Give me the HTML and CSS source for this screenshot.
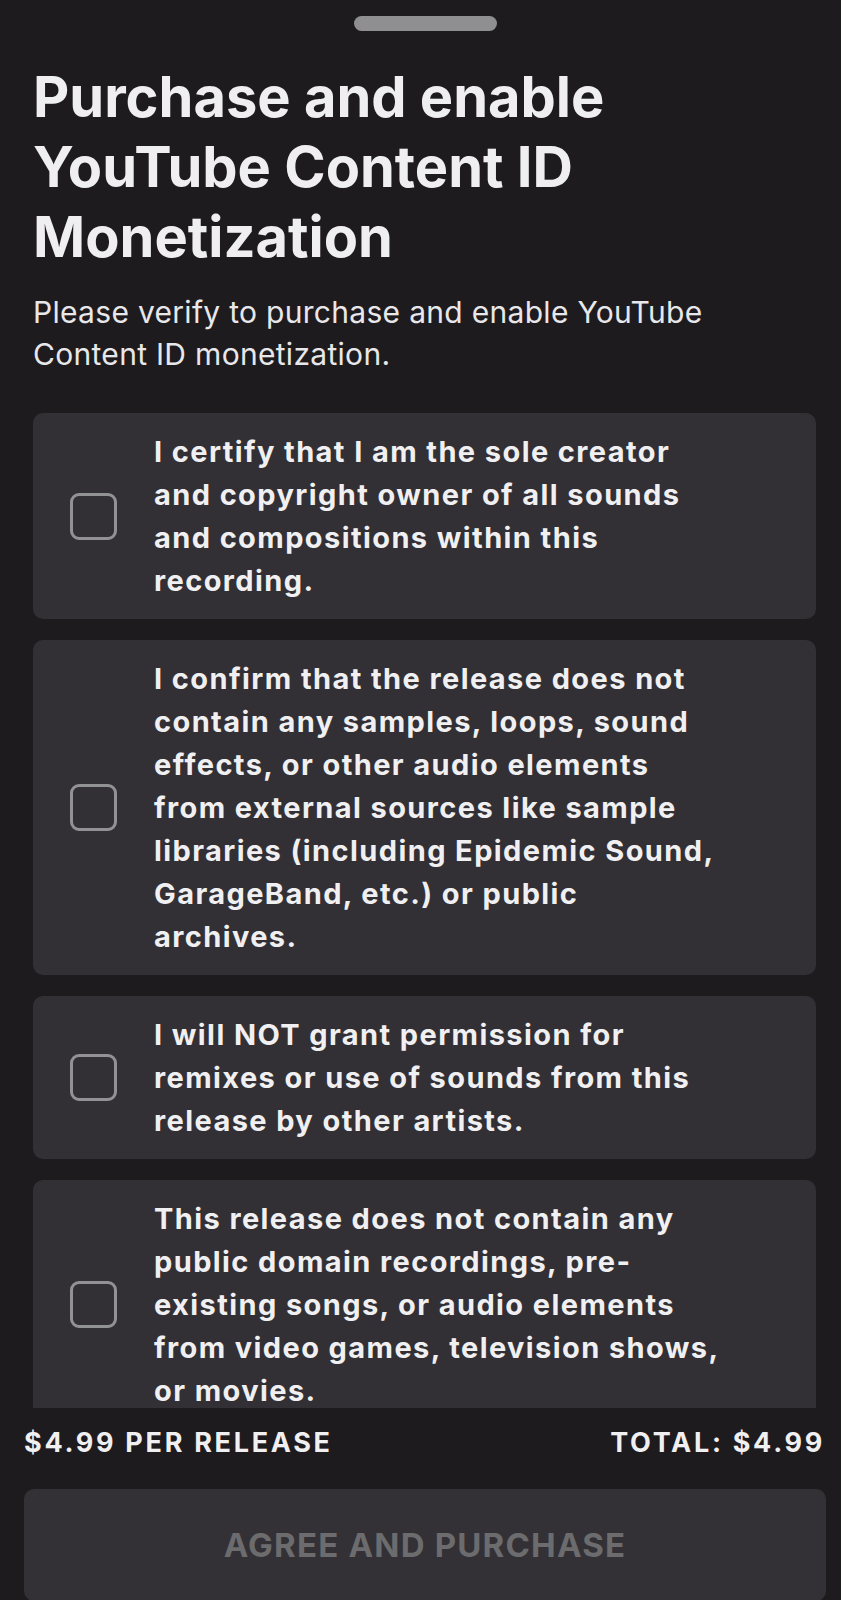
FILE: index.html
```html
<!DOCTYPE html>
<html lang="en">
<head>
<meta charset="utf-8">
<title>Purchase and enable YouTube Content ID Monetization</title>
<link rel="stylesheet" href="styles.css">
</head>
<body>
<div class="sheet">
  <div class="handle"></div>
  <div class="scroll">
    <h1 class="title">Purchase and enable YouTube Content ID Monetization</h1>
    <p class="subtitle">Please verify to purchase and enable YouTube Content ID monetization.</p>
    <ul class="checks">
      <li class="check-card">
        <span class="checkbox"></span>
        <span class="check-text">I certify that I am the sole creator and copyright owner of all sounds and compositions within this recording.</span>
      </li>
      <li class="check-card">
        <span class="checkbox"></span>
        <span class="check-text">I confirm that the release does not contain any samples, loops, sound effects, or other audio elements from external sources like sample libraries (including Epidemic Sound, GarageBand, etc.) or public archives.</span>
      </li>
      <li class="check-card">
        <span class="checkbox"></span>
        <span class="check-text">I will NOT grant permission for remixes or use of sounds from this release by other artists.</span>
      </li>
      <li class="check-card">
        <span class="checkbox"></span>
        <span class="check-text">This release does not contain any public domain recordings, pre-existing songs, or audio elements from video games, television shows, or movies.</span>
      </li>
    </ul>
  </div>
  <div class="footer">
    <div class="price-row">
      <span>$4.99 PER RELEASE</span>
      <span>TOTAL: $4.99</span>
    </div>
    <button class="purchase" type="button">AGREE AND PURCHASE</button>
  </div>
</div>
</body>
</html>
```

FILE: styles.css
```css
* { box-sizing: border-box; }
html, body {
  margin: 0;
  padding: 0;
  background: #1e1b1f;
}
body {
  font-family: Inter, "Liberation Sans", sans-serif;
  color: #f0eff1;
}
.sheet {
  width: 841px;
  height: 1600px;
  display: flex;
  flex-direction: column;
  overflow: hidden;
}
.handle {
  width: 143px;
  height: 15px;
  border-radius: 8px;
  background: #8f8e91;
  margin: 16px 0 0 354px;
  flex: none;
}
.scroll {
  flex: none;
  height: 1377px;
  overflow: hidden;
  padding: 31px 25px 0 33px;
}
.title {
  margin: 0;
  font-size: 56px;
  line-height: 70px;
  font-weight: 700;
  width: 620px;
  color: #efeef0;
}
.subtitle {
  margin: 19px 0 0;
  font-size: 30px;
  line-height: 42px;
  font-weight: 400;
  letter-spacing: 0.3px;
  color: #e8e7ea;
  width: 720px;
}
.checks {
  list-style: none;
  margin: 38px 0 0;
  padding: 0;
  display: flex;
  flex-direction: column;
  gap: 21px;
}
.check-card {
  background: #323034;
  border-radius: 10px;
  padding: 17px 30px 17px 37px;
  display: flex;
  align-items: center;
  gap: 37px;
}
.checkbox {
  flex: none;
  width: 47px;
  height: 47px;
  border: 3.5px solid #929194;
  border-radius: 9px;
}
.check-text {
  font-size: 29px;
  line-height: 43px;
  font-weight: 700;
  letter-spacing: 1.4px;
  max-width: 568px;
}
.footer {
  flex: none;
  padding: 20px 16px 0 24px;
}
.price-row {
  display: flex;
  justify-content: space-between;
  font-size: 27px;
  line-height: 30px;
  font-weight: 700;
  letter-spacing: 2.7px;
}
.purchase {
  display: block;
  width: 802px;
  height: 112px;
  margin-top: 31px;
  border: none;
  border-radius: 10px;
  background: #333135;
  color: #6c6b6e;
  font-family: inherit;
  font-size: 33px;
  font-weight: 700;
  letter-spacing: 1.2px;
}
```
